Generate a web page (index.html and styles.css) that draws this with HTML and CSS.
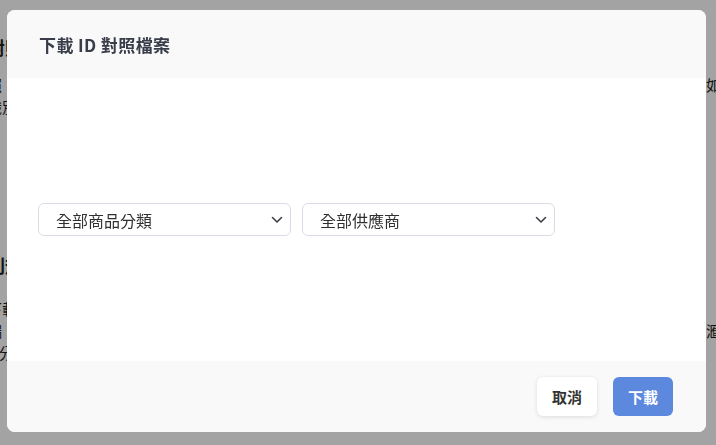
FILE: index.html
```html
<!DOCTYPE html>
<html lang="zh-Hant">
<head>
  <meta charset="UTF-8">
  <title>下載 ID 對照檔案</title>
  <link rel="stylesheet" href="styles.css">
</head>
<body>
  <div class="page">
    <section class="section">
      <h2>對照檔案管理設定</h2>
      <p class="full">照下列步驟操作商品與供應商 ID 對照，完成後即可匯出對照檔案，若有任何問題如</p>
      <p>識別碼將依據目前選擇的分類與供應商產生，請確認資料正確後再下載。</p>
    </section>
    <section class="section second">
      <h2>則規與匯入說明</h2>
      <p>下載後請勿修改欄位名稱與順序，以免檔案匯入時發生錯誤。</p>
      <p class="full">端系統會自動比對 ID，重複的資料將以最新一筆為準，匯入前請先備份原始資料滙</p>
      <p>5 分鐘內最多可下載三次對照檔案。</p>
    </section>
  </div>

  <div class="overlay">
    <div class="modal">
      <div class="modal-header">下載 ID 對照檔案</div>
      <div class="modal-body">
        <div class="select">
          <span>全部商品分類</span>
          <svg width="12" height="8" viewBox="0 0 12 8"><polyline points="1.5,1.5 6,6 10.5,1.5" fill="none" stroke="#3f3f46" stroke-width="1.6" stroke-linecap="round" stroke-linejoin="round"/></svg>
        </div>
        <div class="select">
          <span>全部供應商</span>
          <svg width="12" height="8" viewBox="0 0 12 8"><polyline points="1.5,1.5 6,6 10.5,1.5" fill="none" stroke="#3f3f46" stroke-width="1.6" stroke-linecap="round" stroke-linejoin="round"/></svg>
        </div>
      </div>
      <div class="modal-footer">
        <button class="btn btn-cancel">取消</button>
        <button class="btn btn-primary">下載</button>
      </div>
    </div>
  </div>
</body>
</html>
```

FILE: styles.css
```css
body {
  margin: 0;
  background: #fff;
  font-family: "Noto Sans CJK TC", "Noto Sans", sans-serif;
  color: #222;
  overflow: hidden;
  height: 445px;
}

.page {
  margin-left: -13px;
  width: 760px;
  padding-top: 34px;
}

.section h2 {
  margin: 0 0 14px;
  font-size: 18px;
  line-height: 26px;
  font-weight: 700;
}

.section p {
  margin: 0;
  width: 620px;
  font-size: 15px;
  line-height: 22px;
  white-space: nowrap;
  overflow: hidden;
}

/* lines that run the whole width of the page */
.section p.full {
  width: 734px;
  text-align: justify;
  text-align-last: justify;
}

.second {
  margin-top: 134px;
}

.second h2 {
  margin-bottom: 20px;
}

.overlay {
  position: fixed;
  inset: 0;
  background: rgba(0, 0, 0, 0.36);
  display: flex;
  align-items: flex-start;
  padding: 10px 0 0 7px;
}

.modal {
  width: 699px;
  height: 422px;
  background: #fff;
  border-radius: 8px;
  overflow: hidden;
  display: flex;
  flex-direction: column;
}

.modal-header {
  height: 68px;
  box-sizing: border-box;
  padding: 0 32px;
  display: flex;
  align-items: center;
  background: #f9f9fa;
  font-size: 17px;
  font-weight: 700;
  color: #383d49;
  letter-spacing: 0.4px;
}

.modal-body {
  flex: 1;
  display: flex;
  align-items: center;
  gap: 11px;
  padding: 0 31px;
}

.select {
  width: 253px;
  height: 33px;
  box-sizing: border-box;
  border: 1px solid #d8dde5;
  border-radius: 6px;
  display: flex;
  align-items: center;
  justify-content: space-between;
  padding: 0 7px 0 17px;
  font-size: 16px;
  color: #303030;
}

.modal-footer {
  height: 71px;
  box-sizing: border-box;
  background: #f9f9fa;
  display: flex;
  justify-content: flex-end;
  align-items: center;
  gap: 16px;
  padding: 0 33px 0 0;
}

.btn {
  width: 60px;
  height: 39px;
  border: none;
  border-radius: 6px;
  font-family: inherit;
  font-size: 15px;
  font-weight: 700;
  cursor: pointer;
}

.btn-cancel {
  background: #fff;
  color: #333;
  box-shadow: 0 1px 4px rgba(0, 0, 0, 0.12);
}

.btn-primary {
  background: #5c88de;
  color: #fff;
}
```
